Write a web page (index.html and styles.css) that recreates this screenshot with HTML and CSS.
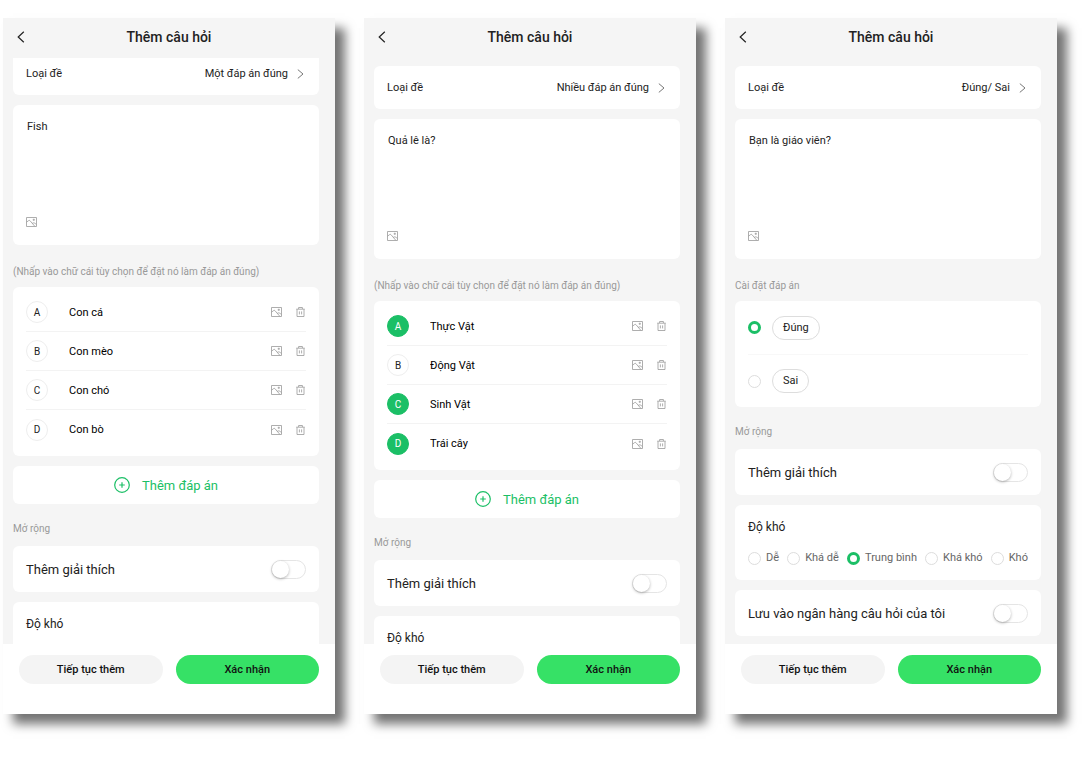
FILE: index.html
```html
<!DOCTYPE html>
<html lang="vi">
<head>
    <meta charset="UTF-8">
    <meta name="viewport" content="width=device-width, initial-scale=1.0">
    <title>Thêm câu hỏi</title>
    <link rel="stylesheet" href="styles.css">
</head>
<body>

    <!-- Shared icons -->
    <svg class="sprite" aria-hidden="true">
        <symbol id="back" viewBox="0 0 8 12"><path d="M6.8 .8L1.2 6l5.6 5.2"/></symbol>
        <symbol id="next" viewBox="0 0 7 10"><path d="M.8 .6L6 5 .8 9.4"/></symbol>
        <symbol id="picture" viewBox="0 0 11 10">
            <path d="M.5 .5h10v9H.5zM.5 5.2L2.6 3.6c.5-.4 1-.3 1.4.1l4.8 5.6M6.2 6.4c1.3-1 2.6-.6 4.2 1.2"/>
            <path d="M7.8 1.7v2.2M6.7 2.8h2.2"/>
        </symbol>
        <symbol id="trash" viewBox="0 0 9 10">
            <path d="M.2 2.2h8.6M2.6 2V.5h3.8V2M1 2.4v7.1h7V2.4M3.4 4.4v3M5.6 4.4v3"/>
        </symbol>
        <symbol id="plus" viewBox="0 0 16 16">
            <circle cx="8" cy="8" r="7.3"/>
            <path d="M8 5.2v5.6M5.2 8h5.6"/>
        </symbol>
    </svg>

    <div class="screens">

        <!-- Single answer -->
        <section class="phone">
            <header class="topbar">
                <button class="back" aria-label="Quay lại"><svg class="icon-back"><use href="#back"/></svg></button>
                <h1>Thêm câu hỏi</h1>
            </header>
            <div class="view">
                <div class="content scrolled">
                    <div class="card type-row">
                        <label for="type1">Loại đề</label>
                        <select id="type1">
                            <option selected>Một đáp án đúng</option>
                            <option>Nhiều đáp án đúng</option>
                            <option>Đúng/ Sai</option>
                        </select>
                        <svg class="icon-next"><use href="#next"/></svg>
                    </div>
                    <div class="card question">
                        <textarea aria-label="Câu hỏi">Fish</textarea>
                        <button class="tool" aria-label="Thêm ảnh"><svg class="icon-picture"><use href="#picture"/></svg></button>
                    </div>
                    <p class="caption">(Nhấp vào chữ cái tùy chọn để đặt nó làm đáp án đúng)</p>
                    <ul class="card options">
                        <li>
                            <button class="letter">A</button>
                            <input type="text" value="Con cá" aria-label="Đáp án A">
                            <button class="tool" aria-label="Thêm ảnh"><svg class="icon-picture"><use href="#picture"/></svg></button>
                            <button class="tool" aria-label="Xóa"><svg class="icon-trash"><use href="#trash"/></svg></button>
                        </li>
                        <li>
                            <button class="letter">B</button>
                            <input type="text" value="Con mèo" aria-label="Đáp án B">
                            <button class="tool" aria-label="Thêm ảnh"><svg class="icon-picture"><use href="#picture"/></svg></button>
                            <button class="tool" aria-label="Xóa"><svg class="icon-trash"><use href="#trash"/></svg></button>
                        </li>
                        <li>
                            <button class="letter">C</button>
                            <input type="text" value="Con chó" aria-label="Đáp án C">
                            <button class="tool" aria-label="Thêm ảnh"><svg class="icon-picture"><use href="#picture"/></svg></button>
                            <button class="tool" aria-label="Xóa"><svg class="icon-trash"><use href="#trash"/></svg></button>
                        </li>
                        <li>
                            <button class="letter">D</button>
                            <input type="text" value="Con bò" aria-label="Đáp án D">
                            <button class="tool" aria-label="Thêm ảnh"><svg class="icon-picture"><use href="#picture"/></svg></button>
                            <button class="tool" aria-label="Xóa"><svg class="icon-trash"><use href="#trash"/></svg></button>
                        </li>
                    </ul>
                    <button class="card add"><svg class="icon-plus"><use href="#plus"/></svg>Thêm đáp án</button>
                    <p class="caption">Mở rộng</p>
                    <div class="card switch-row">
                        <label for="explain1">Thêm giải thích</label>
                        <input type="checkbox" class="switch" id="explain1">
                    </div>
                    <div class="card level">
                        <h2>Độ khó</h2>
                    </div>
                </div>
            </div>
            <footer class="actions">
                <button class="btn">Tiếp tục thêm</button>
                <button class="btn btn-primary">Xác nhận</button>
            </footer>
        </section>

        <!-- Multiple answers -->
        <section class="phone">
            <header class="topbar">
                <button class="back" aria-label="Quay lại"><svg class="icon-back"><use href="#back"/></svg></button>
                <h1>Thêm câu hỏi</h1>
            </header>
            <div class="view">
                <div class="content">
                    <div class="card type-row">
                        <label for="type2">Loại đề</label>
                        <select id="type2">
                            <option>Một đáp án đúng</option>
                            <option selected>Nhiều đáp án đúng</option>
                            <option>Đúng/ Sai</option>
                        </select>
                        <svg class="icon-next"><use href="#next"/></svg>
                    </div>
                    <div class="card question">
                        <textarea aria-label="Câu hỏi">Quả lê là?</textarea>
                        <button class="tool" aria-label="Thêm ảnh"><svg class="icon-picture"><use href="#picture"/></svg></button>
                    </div>
                    <p class="caption">(Nhấp vào chữ cái tùy chọn để đặt nó làm đáp án đúng)</p>
                    <ul class="card options">
                        <li>
                            <button class="letter correct">A</button>
                            <input type="text" value="Thực Vật" aria-label="Đáp án A">
                            <button class="tool" aria-label="Thêm ảnh"><svg class="icon-picture"><use href="#picture"/></svg></button>
                            <button class="tool" aria-label="Xóa"><svg class="icon-trash"><use href="#trash"/></svg></button>
                        </li>
                        <li>
                            <button class="letter">B</button>
                            <input type="text" value="Động Vật" aria-label="Đáp án B">
                            <button class="tool" aria-label="Thêm ảnh"><svg class="icon-picture"><use href="#picture"/></svg></button>
                            <button class="tool" aria-label="Xóa"><svg class="icon-trash"><use href="#trash"/></svg></button>
                        </li>
                        <li>
                            <button class="letter correct">C</button>
                            <input type="text" value="Sinh Vật" aria-label="Đáp án C">
                            <button class="tool" aria-label="Thêm ảnh"><svg class="icon-picture"><use href="#picture"/></svg></button>
                            <button class="tool" aria-label="Xóa"><svg class="icon-trash"><use href="#trash"/></svg></button>
                        </li>
                        <li>
                            <button class="letter correct">D</button>
                            <input type="text" value="Trái cây" aria-label="Đáp án D">
                            <button class="tool" aria-label="Thêm ảnh"><svg class="icon-picture"><use href="#picture"/></svg></button>
                            <button class="tool" aria-label="Xóa"><svg class="icon-trash"><use href="#trash"/></svg></button>
                        </li>
                    </ul>
                    <button class="card add"><svg class="icon-plus"><use href="#plus"/></svg>Thêm đáp án</button>
                    <p class="caption">Mở rộng</p>
                    <div class="card switch-row">
                        <label for="explain2">Thêm giải thích</label>
                        <input type="checkbox" class="switch" id="explain2">
                    </div>
                    <div class="card level">
                        <h2>Độ khó</h2>
                    </div>
                </div>
            </div>
            <footer class="actions">
                <button class="btn">Tiếp tục thêm</button>
                <button class="btn btn-primary">Xác nhận</button>
            </footer>
        </section>

        <!-- True / false -->
        <section class="phone">
            <header class="topbar">
                <button class="back" aria-label="Quay lại"><svg class="icon-back"><use href="#back"/></svg></button>
                <h1>Thêm câu hỏi</h1>
            </header>
            <div class="view">
                <div class="content">
                    <div class="card type-row">
                        <label for="type3">Loại đề</label>
                        <select id="type3">
                            <option>Một đáp án đúng</option>
                            <option>Nhiều đáp án đúng</option>
                            <option selected>Đúng/ Sai</option>
                        </select>
                        <svg class="icon-next"><use href="#next"/></svg>
                    </div>
                    <div class="card question">
                        <textarea aria-label="Câu hỏi">Bạn là giáo viên?</textarea>
                        <button class="tool" aria-label="Thêm ảnh"><svg class="icon-picture"><use href="#picture"/></svg></button>
                    </div>
                    <p class="caption">Cài đặt đáp án</p>
                    <div class="card truefalse">
                        <div class="choice">
                            <input type="radio" name="answer" id="true" checked>
                            <label for="true">Đúng</label>
                        </div>
                        <div class="choice">
                            <input type="radio" name="answer" id="false">
                            <label for="false">Sai</label>
                        </div>
                    </div>
                    <p class="caption">Mở rộng</p>
                    <div class="card switch-row">
                        <label for="explain3">Thêm giải thích</label>
                        <input type="checkbox" class="switch" id="explain3">
                    </div>
                    <div class="card level">
                        <h2>Độ khó</h2>
                        <div class="levels">
                            <label><input type="radio" name="level">Dễ</label>
                            <label><input type="radio" name="level">Khá dễ</label>
                            <label><input type="radio" name="level" checked>Trung bình</label>
                            <label><input type="radio" name="level">Khá khó</label>
                            <label><input type="radio" name="level">Khó</label>
                        </div>
                    </div>
                    <div class="card switch-row">
                        <label for="save3">Lưu vào ngân hàng câu hỏi của tôi</label>
                        <input type="checkbox" class="switch" id="save3">
                    </div>
                </div>
            </div>
            <footer class="actions">
                <button class="btn">Tiếp tục thêm</button>
                <button class="btn btn-primary">Xác nhận</button>
            </footer>
        </section>

    </div>

</body>
</html>
```
FILE: styles.css
```css
* {
    box-sizing: border-box;
}
body {
    margin: 0;
    background-color: #fff;
    font-family: Roboto, "Noto Sans", sans-serif;
    font-size: 11px;
    color: #222;
}
button, input, select, textarea {
    margin: 0;
    padding: 0;
    border: none;
    background: none;
    font: inherit;
    color: inherit;
}
button {
    cursor: pointer;
}
svg {
    display: block;
    flex: none;
    fill: none;
    stroke: currentColor;
}
.sprite {
    display: none;
}
.screens {
    display: grid;
    grid-template-columns: repeat(3, 1fr);
    gap: 29px;
    height: 100vh;
    padding: 18px 26px 44px 3px;
}
.phone {
    display: flex;
    flex-direction: column;
    min-height: 0;
    min-width: 0;
    background-color: #f5f5f5;
    box-shadow: 10px 10px 10px rgba(0, 0, 0, 0.55);
}

/* Header */
.topbar {
    display: grid;
    grid-template-columns: 36px 1fr 36px;
    align-items: center;
    height: 40px;
    padding-bottom: 2px;
}
.topbar h1 {
    margin: 0;
    font-size: 14px;
    font-weight: 500;
    text-align: center;
}
.back {
    padding: 6px 14px;
}
.icon-back {
    width: 8px;
    height: 12px;
    stroke-width: 1.2;
}

/* Scrolling part */
.view {
    flex: 1;
    min-height: 0;
    overflow: hidden;
}
.content {
    display: flex;
    flex-direction: column;
    padding: 8px 16px 9px 10px;
}
.scrolled {
    margin-top: -14px;
}
.card {
    margin: 0;
    padding: 0 13px;
    border-radius: 6px;
    background-color: #fff;
}
.card + .card {
    margin-top: 10px;
}
.caption {
    margin: 0;
    padding: 17px 0 9px;
    font-size: 10px;
    line-height: 16px;
    color: #999;
}
.question + .caption {
    padding: 19px 0 7px;
}
.type-row {
    display: flex;
    align-items: center;
    height: 43px;
}
.type-row select {
    flex: 1;
    appearance: none;
    text-align-last: right;
    padding-right: 9px;
}
.icon-next {
    width: 7px;
    height: 10px;
    margin-right: 2px;
    color: #777;
}
.question {
    display: flex;
    flex-direction: column;
    align-items: flex-start;
    height: 140px;
    padding: 14px 13px 18px;
}
.question textarea {
    flex: 1;
    width: 100%;
    padding-left: 1px;
    line-height: 16px;
    resize: none;
}
.tool {
    color: #999;
}
.icon-picture {
    width: 11px;
    height: 10px;
    stroke-width: 0.8;
}
.icon-trash {
    width: 9px;
    height: 10px;
    stroke-width: 0.8;
}

/* Answers */
.options {
    padding: 6px 13px 7px;
    list-style: none;
}
.options li {
    display: flex;
    align-items: center;
    height: 39px;
    border-bottom: 1px solid #f3f3f3;
}
.options li:last-child {
    border-bottom: none;
}
.options input {
    flex: 1;
    min-width: 0;
    margin-left: 21px;
    color: #000;
}
.options .tool + .tool {
    margin: 0 1px 0 14px;
}
.letter {
    width: 22px;
    height: 22px;
    border: 1px solid #eee;
    border-radius: 50%;
    font-size: 10px;
}
.correct {
    border-color: #1bbf66;
    background-color: #1bbf66;
    color: #fff;
}
.add {
    display: flex;
    align-items: center;
    justify-content: center;
    gap: 12px;
    height: 38px;
    font-size: 13px;
    color: #1bbf66;
}
.icon-plus {
    width: 16px;
    height: 16px;
    stroke-width: 1.2;
}
.truefalse .choice {
    display: flex;
    align-items: center;
    gap: 11px;
    height: 53px;
}
.choice + .choice {
    border-top: 1px solid #f8f8f8;
}
.choice label {
    padding: 0 10px;
    border: 1px solid #ddd;
    border-radius: 12px;
    line-height: 22px;
}
input[type="radio"] {
    appearance: none;
    flex: none;
    width: 13px;
    height: 13px;
    border: 1px solid #ddd;
    border-radius: 50%;
}
input[type="radio"]:checked {
    border: 3px solid #1bbf66;
}

/* Extra settings */
.switch-row {
    display: flex;
    align-items: center;
    justify-content: space-between;
    height: 46px;
    font-size: 13px;
}
.switch {
    appearance: none;
    width: 35px;
    height: 19px;
    border: 1px solid #e5e5e5;
    border-radius: 10px;
}
.switch::before {
    content: "";
    display: block;
    width: 17px;
    height: 17px;
    border-radius: 50%;
    background-color: #fff;
    box-shadow: 0 1px 3px rgba(0, 0, 0, 0.3);
}
.level {
    height: 75px;
    padding-top: 14px;
}
.level h2 {
    margin: 0;
    font-size: 12px;
    font-weight: 400;
    line-height: 16px;
}
.levels {
    display: flex;
    justify-content: space-between;
    padding-top: 15px;
    line-height: 16px;
    color: #666;
}
.levels label {
    display: flex;
    align-items: center;
    gap: 5px;
}

/* Bottom buttons */
.actions {
    display: flex;
    align-items: flex-start;
    gap: 13px;
    height: 70px;
    padding: 11px 16px;
    background-color: #fff;
}
.btn {
    flex: 1;
    height: 29px;
    border-radius: 15px;
    background-color: #f4f4f4;
    font-weight: 500;
    color: #111;
}
.btn-primary {
    background-color: #36e166;
}
```
